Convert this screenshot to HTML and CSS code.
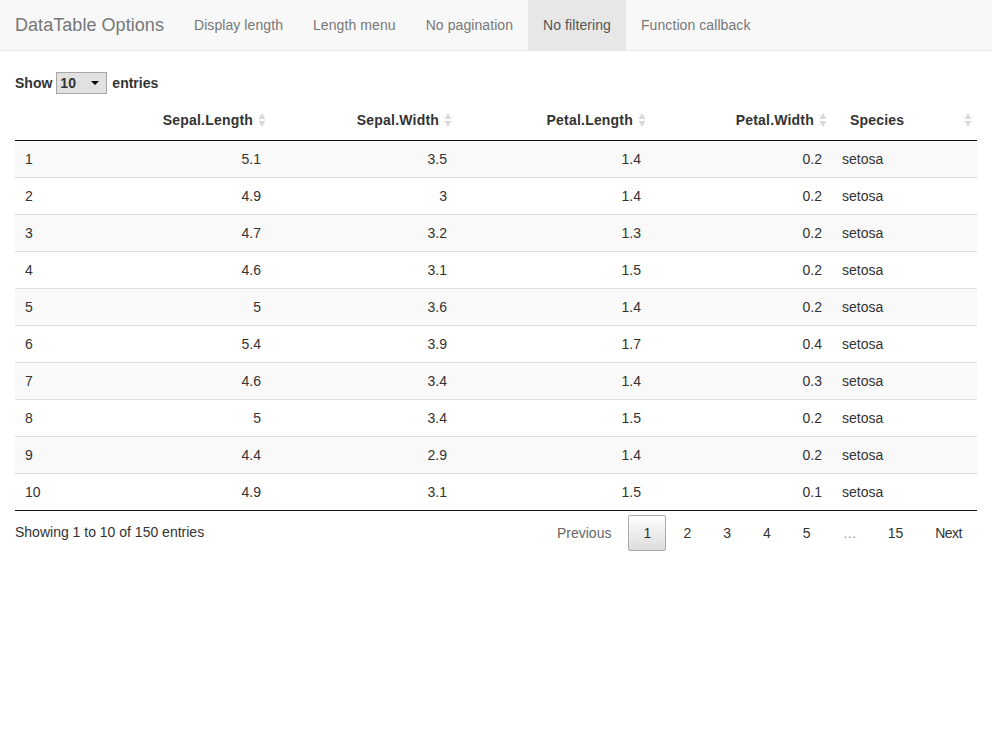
FILE: index.html
```html
<!DOCTYPE html>
<html>
<head>
<meta charset="utf-8">
<title>DataTable Options</title>
<link rel="stylesheet" href="styles.css">
</head>
<body>
<nav class="navbar">
  <span class="brand">DataTable Options</span>
  <ul class="nav">
    <li><a>Display length</a></li>
    <li><a>Length menu</a></li>
    <li><a>No pagination</a></li>
    <li class="active"><a>No filtering</a></li>
    <li><a>Function callback</a></li>
  </ul>
</nav>
<main class="content">
  <div class="dt-length">
    <label>Show <span class="select-wrap"><select><option>10</option></select><span class="caret"></span></span> entries</label>
  </div>
  <table class="dt">
    <colgroup>
      <col class="c0"><col class="c1"><col class="c2"><col class="c3"><col class="c4"><col class="c5">
    </colgroup>
    <thead>
      <tr>
        <th class="blank"></th>
        <th class="num sort">Sepal.Length<svg class="sorticon" width="8" height="16" viewBox="0 0 8 16"><path d="M4 1 L7.5 7 L0.5 7 Z M4 15 L7.5 9 L0.5 9 Z"/></svg></th>
        <th class="num sort">Sepal.Width<svg class="sorticon" width="8" height="16" viewBox="0 0 8 16"><path d="M4 1 L7.5 7 L0.5 7 Z M4 15 L7.5 9 L0.5 9 Z"/></svg></th>
        <th class="num sort">Petal.Length<svg class="sorticon" width="8" height="16" viewBox="0 0 8 16"><path d="M4 1 L7.5 7 L0.5 7 Z M4 15 L7.5 9 L0.5 9 Z"/></svg></th>
        <th class="num sort">Petal.Width<svg class="sorticon" width="8" height="16" viewBox="0 0 8 16"><path d="M4 1 L7.5 7 L0.5 7 Z M4 15 L7.5 9 L0.5 9 Z"/></svg></th>
        <th class="txt sort">Species<svg class="sorticon" width="8" height="16" viewBox="0 0 8 16"><path d="M4 1 L7.5 7 L0.5 7 Z M4 15 L7.5 9 L0.5 9 Z"/></svg></th>
      </tr>
    </thead>
    <tbody>
      <tr class="odd"><td>1</td><td class="num">5.1</td><td class="num">3.5</td><td class="num">1.4</td><td class="num">0.2</td><td>setosa</td></tr>
      <tr><td>2</td><td class="num">4.9</td><td class="num">3</td><td class="num">1.4</td><td class="num">0.2</td><td>setosa</td></tr>
      <tr class="odd"><td>3</td><td class="num">4.7</td><td class="num">3.2</td><td class="num">1.3</td><td class="num">0.2</td><td>setosa</td></tr>
      <tr><td>4</td><td class="num">4.6</td><td class="num">3.1</td><td class="num">1.5</td><td class="num">0.2</td><td>setosa</td></tr>
      <tr class="odd"><td>5</td><td class="num">5</td><td class="num">3.6</td><td class="num">1.4</td><td class="num">0.2</td><td>setosa</td></tr>
      <tr><td>6</td><td class="num">5.4</td><td class="num">3.9</td><td class="num">1.7</td><td class="num">0.4</td><td>setosa</td></tr>
      <tr class="odd"><td>7</td><td class="num">4.6</td><td class="num">3.4</td><td class="num">1.4</td><td class="num">0.3</td><td>setosa</td></tr>
      <tr><td>8</td><td class="num">5</td><td class="num">3.4</td><td class="num">1.5</td><td class="num">0.2</td><td>setosa</td></tr>
      <tr class="odd"><td>9</td><td class="num">4.4</td><td class="num">2.9</td><td class="num">1.4</td><td class="num">0.2</td><td>setosa</td></tr>
      <tr><td>10</td><td class="num">4.9</td><td class="num">3.1</td><td class="num">1.5</td><td class="num">0.1</td><td>setosa</td></tr>
    </tbody>
  </table>
  <div class="dt-footer">
    <div class="dt-info">Showing 1 to 10 of 150 entries</div>
    <div class="dt-paginate">
      <a class="pbtn disabled">Previous</a>
      <a class="pbtn current">1</a>
      <a class="pbtn">2</a>
      <a class="pbtn">3</a>
      <a class="pbtn">4</a>
      <a class="pbtn">5</a>
      <span class="ellipsis">…</span>
      <a class="pbtn">15</a>
      <a class="pbtn next">Next</a>
    </div>
  </div>
</main>
</body>
</html>
```

FILE: styles.css
```css
* { box-sizing: border-box; }
html, body { margin: 0; padding: 0; }
body {
  font-family: "Liberation Sans", Arial, sans-serif;
  font-size: 14px;
  line-height: 20px;
  color: #333;
  background: #fff;
}
.navbar {
  display: flex;
  align-items: stretch;
  height: 51px;
  background: #f8f8f8;
  border-bottom: 1px solid #e7e7e7;
}
.brand {
  display: block;
  padding: 15px;
  height: 50px;
  font-size: 18px;
  line-height: 20px;
  color: #777;
  letter-spacing: 0.05px;
}
.nav {
  display: flex;
  list-style: none;
  margin: 0;
  padding: 0;
}
.nav li a {
  display: block;
  padding: 15px;
  height: 50px;
  line-height: 20px;
  color: #777;
  letter-spacing: 0.08px;
}
.nav li.active a {
  background: #e7e7e7;
  color: #555;
}
.content {
  padding: 0 15px;
  margin-top: 20px;
}
.dt-length {
  margin-top: 3px;
  height: 22px;
}
.dt-length label {
  font-weight: bold;
  line-height: 22px;
  display: flex;
  align-items: center;
  gap: 4px;
  position: relative;
  top: 1px;
}
.select-wrap {
  position: relative;
  display: inline-block;
  margin-right: 1px;
}
.select-wrap select {
  -webkit-appearance: none;
  appearance: none;
  width: 51px;
  height: 22px;
  padding: 0 0 0 3px;
  margin: 0;
  border: 1px solid #a6a6a6;
  border-radius: 0;
  background: #e1e1e1;
  font-family: "Liberation Sans", Arial, sans-serif;
  font-size: 14px;
  font-weight: bold;
  color: #333;
}
.caret {
  position: absolute;
  right: 8px;
  top: 9px;
  width: 0;
  height: 0;
  border-left: 4px solid transparent;
  border-right: 4px solid transparent;
  border-top: 4px solid #000;
}
.dt {
  width: 962px;
  margin-top: 7px;
  border-collapse: collapse;
  border-spacing: 0;
  table-layout: fixed;
}
.c0 { width: 80px; }
.c1 { width: 176px; }
.c2 { width: 186px; }
.c3 { width: 194px; }
.c4 { width: 181px; }
.c5 { width: 145px; }
.dt thead th {
  position: relative;
  padding: 10px 18px;
  font-weight: bold;
  line-height: 20px;
  border-bottom: 1px solid #111;
  letter-spacing: 0.2px;
}
.dt thead th.num { text-align: right; }
.dt thead th.txt { text-align: left; }
.sorticon {
  position: absolute;
  right: 5px;
  top: 12px;
  fill: #d9d9d9;
}
.dt tbody td {
  padding: 8px 10px;
  line-height: 20px;
  border-top: 1px solid #ddd;
}
.dt tbody tr:first-child td { border-top: none; }
.dt tbody tr.odd { background: #f9f9f9; }
.dt tbody td.num { text-align: right; }
.dt tbody tr:last-child td { border-bottom: 1px solid #111; }
.dt-footer {
  display: flex;
  justify-content: space-between;
  align-items: flex-start;
}
.dt-info {
  padding-top: 10.5px;
}
.dt-paginate {
  padding-top: 4px;
  display: flex;
  align-items: center;
}
.pbtn {
  display: inline-block;
  min-width: 21px;
  padding: 7px 14px;
  margin-left: 2px;
  border: 1px solid transparent;
  border-radius: 2px;
  text-align: center;
  color: #333;
  line-height: 20px;
}
.pbtn.next { letter-spacing: -0.5px; }
.pbtn.disabled { color: #666; }
.pbtn.current {
  min-width: 38px;
  border: 1px solid #aaa;
  background: linear-gradient(to bottom, #fff 0%, #dcdcdc 100%);
}
.ellipsis {
  display: inline-block;
  padding: 0 14px;
  margin-left: 3px;
  color: #999;
}
```
